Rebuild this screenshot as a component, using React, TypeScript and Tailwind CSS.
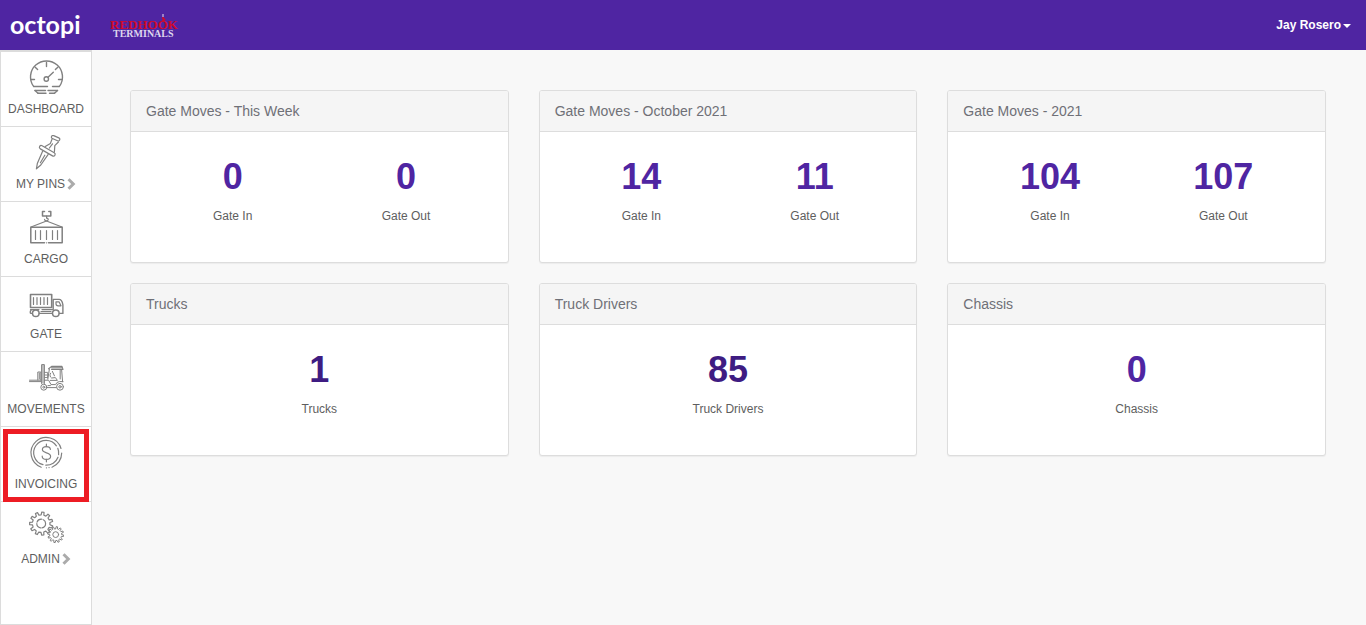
import * as React from 'react';

interface Stat {
  label: string;
  value: number;
  href?: string;
}

interface Panel {
  title: string;
  stats: Stat[];
}

interface NavItem {
  label: string;
  icon: React.FC;
  hasChildren?: boolean;
  highlighted?: boolean;
}

const gearPath = (cx: number, cy: number, outer: number, root: number, teeth: number) => {
  const step = (Math.PI * 2) / teeth;
  const point = (r: number, a: number) =>
    `${(cx + r * Math.cos(a)).toFixed(2)} ${(cy + r * Math.sin(a)).toFixed(2)}`;
  const points: string[] = [];
  for (let i = 0; i < teeth; i++) {
    const a = i * step - Math.PI / 2 + 0.15;
    points.push(
      point(root, a - step * 0.28),
      point(outer, a - step * 0.17),
      point(outer, a + step * 0.17),
      point(root, a + step * 0.28)
    );
  }
  return `M${points.join('L')}Z`;
};

const IconFrame: React.FC<{ children: React.ReactNode }> = ({ children }) => (
  <svg
    viewBox="0 0 36 36"
    className="h-9 w-9"
    fill="none"
    stroke="#808080"
    strokeWidth="1.2"
    strokeLinecap="round"
    strokeLinejoin="round"
    aria-hidden="true"
  >
    {children}
  </svg>
);

const GaugeIcon: React.FC = () => (
  <IconFrame>
    <g transform="translate(0 1)" strokeWidth="1.4">
      <path d="M5.6 25.4A16 16 0 1 1 31.4 25.4" />
      <path d="M6 25.5H19.5M24.5 25.5H31" />
      <path d="M7 29.5H17.5M20 29.5H29.5M10 32.3H18M21.5 32.3H26.5" />
      <path d="M7 29.5L10 32.3M29.5 29.5L26.5 32.3" />
      <path d="M2.8 18.5H6.5M30.5 18.5H34.2M18.5 1.5V5.5M7.2 6.2L9.6 8.6M29.8 6.2L27.4 8.6" />
      <circle cx="18.3" cy="18" r="2.2" />
      <path d="M20 16.2L25.3 11.2" />
    </g>
  </IconFrame>
);

const PinIcon: React.FC = () => (
  <IconFrame>
    <rect x="-4.4" y="-1.6" width="8.8" height="3.2" rx="1.6" transform="translate(27.6 3.2) rotate(24)" />
    <rect x="-8.8" y="-1.8" width="17.6" height="3.6" rx="1.8" transform="translate(19.3 15.8) rotate(30)" />
    <path d="M24.2 3.8L22.4 8.4L17.2 11.6M30.4 7L26.8 10.6L26.4 17" />
    <path d="M24.5 8.8L21.4 13" />
    <path d="M14.6 16.3L9.4 28.2L8.4 33.8L12.8 30L20.2 19.4" />
    <path d="M16.8 20.2L12.4 27.8" />
  </IconFrame>
);

const ContainerIcon: React.FC = () => (
  <IconFrame>
    <path d="M16.5 1.5H14.5V6H22.8V1.5H20.8" strokeWidth="1.5" />
    <path d="M18.6 6V8.2C20.8 8.4 20.8 10.8 18.6 10.8C17.2 10.8 16.6 10.2 16.6 9.4" />
    <path d="M3 17L18.5 11L34 17" />
    <path d="M16.5 32.8H2.8V17.3H34.2V32.8H20.5" strokeWidth="1.5" />
    <path d="M18.5 32.8H18.6" />
    <path d="M7.5 20.5V29.5M12.5 20.5V29.5M18.5 20.5V29.5M24.5 20.5V29.5M29.5 20.5V29.5" />
  </IconFrame>
);

const TruckIcon: React.FC = () => (
  <IconFrame>
    <path d="M2.5 9.5H23.7V22.5H2.5Z" strokeWidth="1.6" />
    <path d="M5.5 12.5V19.5M9 12.5V19.5M12.5 12.5V19.5M16 12.5V19.5M19.5 12.5V19.5" />
    <path d="M2.5 24.6H11M14 24.6H24.5" />
    <path d="M4.2 28.4H3C2 28.4 2 26 3 25.4M11.3 28.4H24M31.4 28.4H34.9V19.8Q34 14.4 31 14.4H25.2V24.5" strokeWidth="1.4" />
    <path d="M13 26.5H23" />
    <path d="M28 16.8H31L33 20.8H30.2C28.6 20.8 28 20 28 18.8Z" />
    <circle cx="7.8" cy="28.3" r="3.3" strokeWidth="1.5" />
    <circle cx="27.8" cy="28.3" r="3.3" strokeWidth="1.5" />
  </IconFrame>
);

const ForkliftIcon: React.FC = () => (
  <IconFrame>
    <path d="M1.5 20.2H12.8M1.5 21.6H12.8" strokeWidth="1" />
    <path d="M9.8 20V12H12.8V20M11.3 13V19" strokeWidth="1" />
    <path d="M13.6 23.5V4.6H16.4V23.5M15 5V23" strokeWidth="1" />
    <path d="M20.6 8.8L23.6 6.4H34L35 9.4H23.6M23.6 7.8H34" strokeWidth="1.1" />
    <path d="M21.4 9L19.8 19.2M33.6 9.6L34.6 21.8M32.2 9.6V19" strokeWidth="1" />
    <path d="M16.6 12.4H19.6V18M17 15H19M17 17.5H19" strokeWidth="0.9" />
    <path d="M22.6 13.2C21.4 15 22 17 23.6 18L27.4 17.6L29.4 20.4H22.4M24.4 11.4L26.4 15.8" strokeWidth="1" />
    <path d="M16.6 20.2H20.6L23 24.6H27.6Q28.6 21.8 31.4 21.6H35" strokeWidth="1" />
    <path d="M19.4 27.6H28.2M20 25.6H22.4" strokeWidth="1" />
    <circle cx="15.8" cy="27.2" r="3" strokeWidth="1" />
    <circle cx="15.8" cy="27.2" r="1" strokeWidth="1" />
    <circle cx="32" cy="26.8" r="3.4" strokeWidth="1" />
    <circle cx="32" cy="26.8" r="1.2" strokeWidth="1" />
  </IconFrame>
);

const CoinIcon: React.FC = () => (
  <IconFrame>
    <g transform="translate(0 1)">
      <path d="M13.2 31.2A15.3 15.3 0 1 1 33 12.5M33.7 17A15.3 15.3 0 0 1 24 31.2" />
      <path d="M18.4 31.8H18.5M21 31.6H21.1" />
      <path d="M15 28.7A12.4 12.4 0 1 1 28.4 9.8M29.8 12.3A12.4 12.4 0 0 1 30.6 18.6M30 21.2A12.4 12.4 0 0 1 17.8 29.2" />
      <path d="M18.4 8.2V10.6M18.4 23.4V25.8" />
      <path d="M22.4 13.4C22.2 11.6 20.6 10.6 18.4 10.6C16 10.6 14.4 11.8 14.4 13.6C14.4 17.8 22.6 15.8 22.6 20.2C22.6 22.2 20.8 23.4 18.4 23.4C16 23.4 14.3 22.2 14.2 20.2" />
    </g>
  </IconFrame>
);

const GearsIcon: React.FC = () => (
  <IconFrame>
    <path d={gearPath(13.2, 13.6, 11.6, 8.8, 11)} />
    <circle cx="13.2" cy="13.6" r="4.4" strokeDasharray="6 1.5" />
    <path d={gearPath(27.7, 24.6, 8, 6, 12)} fill="white" strokeWidth="1" />
    <circle cx="27.7" cy="24.6" r="2.9" strokeWidth="1" />
  </IconFrame>
);

const ChevronRight: React.FC = () => (
  <svg viewBox="0 0 9 12" className="h-3 w-[9px]" fill="none" stroke="#ababab" strokeWidth="3" aria-hidden="true">
    <path d="M1.5 1.2L6.3 6L1.5 10.8" />
  </svg>
);

const TerminalLogo: React.FC = () => (
  <svg viewBox="0 0 70 26" className="h-[26px] w-[70px]" role="img" aria-label="Red Hook Terminals">
    <g fontFamily="Liberation Serif, serif" fontWeight="bold">
      <text x="0" y="17" fontSize="13" fill="#cf0a2c">
        REDHOOK
      </text>
      <text x="3" y="25" fontSize="10" fill="#ded6ee">
        TERMINALS
      </text>
    </g>
    <path d="M53 2V5" stroke="#b9a9dc" strokeWidth="1.4" />
    <path d="M53 5V6.5C55.5 7 55 9 52 8.5" fill="none" stroke="#cf0a2c" strokeWidth="1.6" />
  </svg>
);

const navItems: NavItem[] = [
  { label: 'DASHBOARD', icon: GaugeIcon },
  { label: 'MY PINS', icon: PinIcon, hasChildren: true },
  { label: 'CARGO', icon: ContainerIcon },
  { label: 'GATE', icon: TruckIcon },
  { label: 'MOVEMENTS', icon: ForkliftIcon },
  { label: 'INVOICING', icon: CoinIcon, highlighted: true },
  { label: 'ADMIN', icon: GearsIcon, hasChildren: true },
];

const panels: Panel[] = [
  {
    title: 'Gate Moves - This Week',
    stats: [
      { label: 'Gate In', value: 0 },
      { label: 'Gate Out', value: 0 },
    ],
  },
  {
    title: 'Gate Moves - October 2021',
    stats: [
      { label: 'Gate In', value: 14 },
      { label: 'Gate Out', value: 11 },
    ],
  },
  {
    title: 'Gate Moves - 2021',
    stats: [
      { label: 'Gate In', value: 104 },
      { label: 'Gate Out', value: 107 },
    ],
  },
  { title: 'Trucks', stats: [{ label: 'Trucks', value: 1, href: '#trucks' }] },
  { title: 'Truck Drivers', stats: [{ label: 'Truck Drivers', value: 85, href: '#drivers' }] },
  { title: 'Chassis', stats: [{ label: 'Chassis', value: 0 }] },
];

const Header: React.FC = () => (
  <header className="flex h-[50px] items-center bg-[#4f25a2] pr-[15px] pl-2.5 text-white">
    <a href="#home" className="pb-0.5 font-[Lato,sans-serif] text-[25px] leading-8 font-bold">
      octopi
    </a>
    <a href="#terminal" className="ml-[29px]">
      <TerminalLogo />
    </a>
    <button type="button" className="ml-auto flex items-center gap-0.5 text-xs font-bold">
      Jay Rosero
      <svg viewBox="0 0 8 4" className="mt-0.5 h-1 w-2" fill="currentColor" aria-hidden="true">
        <path d="M0 0H8L4 4Z" />
      </svg>
    </button>
  </header>
);

const Sidebar: React.FC = () => (
  <nav className="w-[92px] shrink-0 border border-t-2 border-[#dcdcdc] bg-white">
    <ul>
      {navItems.map((item) => (
        <li key={item.label} className="relative border-b border-[#dcdcdc] last:border-b-0">
          <a href="#" className="flex flex-col items-center py-2 text-xs text-[#5e5e5e]">
            <item.icon />
            <span className="mt-1 flex items-center gap-0.5 leading-[18px]">
              {item.label}
              {item.hasChildren && <ChevronRight />}
            </span>
          </a>
          {item.highlighted && (
            <span className="pointer-events-none absolute inset-x-0.5 top-0.5 -bottom-px border-5 border-[#ed1c24]" />
          )}
        </li>
      ))}
    </ul>
  </nav>
);

const StatPanel: React.FC<{ panel: Panel }> = ({ panel }) => (
  <section className="overflow-hidden rounded-[3px] border border-[#dddddd] bg-white shadow-[0_1px_1px_rgba(0,0,0,0.05)]">
    <h2 className="border-b border-[#dddddd] bg-[#f5f5f5] px-[15px] py-2.5 text-sm text-[#6f7077]">{panel.title}</h2>
    <div className="flex px-[15px] pt-[25px] pb-[37px] text-center">
      {panel.stats.map((stat) => (
        <div key={stat.label} className="flex-1">
          <p className="text-4xl font-bold text-[#4f25a2]">
            {stat.href ? (
              <a href={stat.href} className="text-[#3e1c82]">
                {stat.value}
              </a>
            ) : (
              stat.value
            )}
          </p>
          <p className="mt-2.5 text-xs leading-[18px] text-[#5e5e5e]">{stat.label}</p>
        </div>
      ))}
    </div>
  </section>
);

export default function App() {
  return (
    <div className="flex min-h-screen flex-col bg-[#f8f8f8] font-['Liberation_Sans',Arial,sans-serif]">
      <Header />
      <div className="flex flex-1">
        <Sidebar />
        <main className="grid flex-1 grid-cols-1 content-start gap-x-[30px] gap-y-5 pt-10 pr-10 pb-10 pl-[38px] md:grid-cols-3">
          {panels.map((panel) => (
            <StatPanel key={panel.title} panel={panel} />
          ))}
        </main>
      </div>
    </div>
  );
}
